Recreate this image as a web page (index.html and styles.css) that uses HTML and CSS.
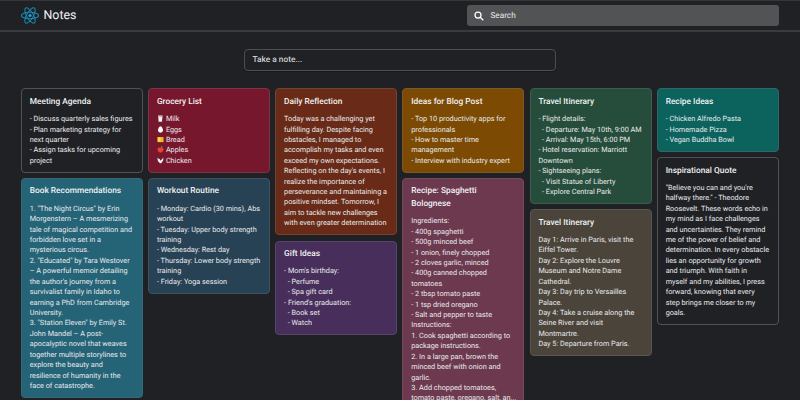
FILE: index.html
```html
<!DOCTYPE html>
<html lang="en">
<head>
<meta charset="utf-8">
<title>Notes</title>
<link rel="stylesheet" href="styles.css">
</head>
<body>
<header class="topbar">
  <svg class="logo" viewBox="-11.5 -10.5 23 21" fill="none" stroke="#1689b5" stroke-width="1.3">
    <circle r="2" fill="#2ba5d0" stroke="none"/>
    <ellipse rx="11" ry="4.2"/>
    <ellipse rx="11" ry="4.2" transform="rotate(60)"/>
    <ellipse rx="11" ry="4.2" transform="rotate(120)"/>
  </svg>
  <h1 class="brand">Notes</h1>
  <div class="search">
    <svg class="search-icon" viewBox="0 0 10 10" fill="none" stroke="#fff" stroke-width="1.25"><circle cx="4" cy="4" r="3"/><path d="M6.2 6.2 9.3 9.3"/></svg>
    <span>Search</span>
  </div>
</header>
<div class="composer">Take a note...</div>
<main class="board">
  <div class="column">
    <article class="card plain"><h2>Meeting Agenda</h2><p>- Discuss quarterly sales figures
- Plan marketing strategy for
next quarter
- Assign tasks for upcoming
project</p></article>
    <article class="card cyan"><h2>Book Recommendations</h2><p>1. "The Night Circus" by Erin
Morgenstern – A mesmerizing
tale of magical competition and
forbidden love set in a
mysterious circus.
2. "Educated" by Tara Westover
– A powerful memoir detailing
the author's journey from a
survivalist family in Idaho to
earning a PhD from Cambridge
University.
3. "Station Eleven" by Emily St.
John Mandel – A post-
apocalyptic novel that weaves
together multiple storylines to
explore the beauty and
resilience of humanity in the
face of catastrophe.</p></article>
  </div>
  <div class="column">
    <article class="card crimson"><h2>Grocery List</h2><p><svg class="food" viewBox="0 0 8 8"><path d="M1.3.6h5L5.7 7.6H1.9z" fill="#f4f5f2"/><path d="M1.7 1.6h4.2v.8H1.7z" fill="#8d9a96"/></svg>Milk
<svg class="food" viewBox="0 0 8 8"><path d="M4 .3C5.6.3 6.8 3 6.8 4.9a2.8 2.8 0 0 1-5.6 0C1.2 3 2.4.3 4 .3z" fill="#fff"/></svg>Eggs
<svg class="food" viewBox="0 0 8 8"><path d="M.5 1.2h7v5.8h-7z" fill="#f3b51c"/><path d="M1 1.6h3v4.8H1z" fill="#ffd653"/></svg>Bread
<svg class="food" viewBox="0 0 8 8"><path d="M4 2.3C1.5.9.4 2.5.7 4.4.9 6 2.3 8 4 7.4 5.7 8 7.1 6 7.3 4.4 7.6 2.5 6.5.9 4 2.3z" fill="#ef4128"/><path d="M3.8 2.2C3.8.7 5 .1 6.2.4 6.1 1.6 5 2.3 3.8 2.2z" fill="#54a43b"/><path d="M4 2.5 2.9.5" stroke="#542b1b" stroke-width=".7"/></svg>Apples
<svg class="food" viewBox="0 0 8 8"><path d="M.5.8 3 2.2 4 4.2 7.3.6 7.1 3.8 4.8 7.2H3.4L1 4.7z" fill="#f4f6f0"/><path d="M.7.8 2.7 1 3 2.6zM4.2 3.1 5.7.9 7.3.6z" fill="#284d3b"/></svg>Chicken</p></article>
    <article class="card navy"><h2>Workout Routine</h2><p>- Monday: Cardio (30 mins), Abs
workout
- Tuesday: Upper body strength
training
- Wednesday: Rest day
- Thursday: Lower body strength
training
- Friday: Yoga session</p></article>
  </div>
  <div class="column">
    <article class="card rust"><h2>Daily Reflection</h2><p>Today was a challenging yet
fulfilling day. Despite facing
obstacles, I managed to
accomplish my tasks and even
exceed my own expectations.
Reflecting on the day's events, I
realize the importance of
perseverance and maintaining a
positive mindset. Tomorrow, I
aim to tackle new challenges
with even greater determination</p></article>
    <article class="card purple"><h2>Gift Ideas</h2><p>- Mom's birthday:
  - Perfume
  - Spa gift card
- Friend's graduation:
  - Book set
  - Watch</p></article>
  </div>
  <div class="column">
    <article class="card amber"><h2>Ideas for Blog Post</h2><p>- Top 10 productivity apps for
professionals
- How to master time
management
- Interview with industry expert</p></article>
    <article class="card plum"><h2>Recipe: Spaghetti
Bolognese</h2><p>Ingredients:
- 400g spaghetti
- 500g minced beef
- 1 onion, finely chopped
- 2 cloves garlic, minced
- 400g canned chopped
tomatoes
- 2 tbsp tomato paste
- 1 tsp dried oregano
- Salt and pepper to taste
Instructions:
1. Cook spaghetti according to
package instructions.
2. In a large pan, brown the
minced beef with onion and
garlic.
3. Add chopped tomatoes,
tomato paste, oregano, salt, an...</p></article>
  </div>
  <div class="column">
    <article class="card green"><h2>Travel Itinerary</h2><p>- Flight details:
  - Departure: May 10th, 9:00 AM
  - Arrival: May 15th, 6:00 PM
- Hotel reservation: Marriott
Downtown
- Sightseeing plans:
  - Visit Statue of Liberty
  - Explore Central Park</p></article>
    <article class="card taupe"><h2>Travel Itinerary</h2><p>Day 1: Arrive in Paris, visit the
Eiffel Tower.
Day 2: Explore the Louvre
Museum and Notre Dame
Cathedral.
Day 3: Day trip to Versailles
Palace.
Day 4: Take a cruise along the
Seine River and visit
Montmartre.
Day 5: Departure from Paris.</p></article>
  </div>
  <div class="column">
    <article class="card teal"><h2>Recipe Ideas</h2><p>- Chicken Alfredo Pasta
- Homemade Pizza
- Vegan Buddha Bowl</p></article>
    <article class="card plain"><h2>Inspirational Quote</h2><p>"Believe you can and you're
halfway there." - Theodore
Roosevelt. These words echo in
my mind as I face challenges
and uncertainties. They remind
me of the power of belief and
determination. In every obstacle
lies an opportunity for growth
and triumph. With faith in
myself and my abilities, I press
forward, knowing that every
step brings me closer to my
goals.</p></article>
  </div>
</main>
</body>
</html>
```
FILE: styles.css
```css
* { box-sizing: border-box; }
html { overflow: hidden; }
body {
  margin: 0;
  height: 400px;
  overflow: hidden;
  background: #202124;
  color: #e8eaed;
  font-family: Roboto, "Liberation Sans", sans-serif;
  text-rendering: geometricPrecision;
}
h1, h2, p { margin: 0; }
.topbar {
  display: flex;
  align-items: center;
  height: 32px;
  padding: 0 21px;
  border-top: 1px solid #35363a;
  border-bottom: 2px solid #3a3b3e;
}
.logo { width: 18px; height: 17px; }
.brand { margin-left: 4.5px; font-size: 12.4px; font-weight: 400; color: #f1f2f3; }
.search {
  display: flex;
  align-items: center;
  width: 312px;
  height: 21px;
  margin-left: auto;
  padding-left: 7px;
  border-radius: 3px;
  background: #525355;
  font-size: 8.2px;
}
.search-icon { width: 10px; height: 10px; margin-right: 6.5px; }
.composer {
  width: 312.5px;
  height: 22px;
  margin: 17px 0 0 243.5px;
  padding-left: 8px;
  border: 1px solid #4c4e52;
  border-radius: 4px;
  font-size: 8.33px;
  font-weight: 500;
  line-height: 21px;
  color: #cfd0d2;
  box-shadow: 0 1px 1px #17181a;
}
.board {
  display: grid;
  grid-template-columns: repeat(6, 122px);
  column-gap: 5.2px;
  align-items: start;
  margin: 17.4px 0 0 20.9px;
}
.column { display: grid; grid-template-columns: 122px; gap: 5.4px; }
.card {
  padding: 6.4px 7.8px 5.5px;
  border: 1px solid #5f6368;
  border-radius: 4px;
  white-space: pre;
}
.card h2 { margin-bottom: 5.8px; font-size: 8.33px; font-weight: 500; line-height: 12.5px; letter-spacing: .01px; color: #f1f2f3; }
.card p { font-size: 7.29px; line-height: 10.42px; }
.food { width: 7px; height: 7px; margin-right: 2px; vertical-align: -1px; }
.plain { border-color: #505256; }
.cyan { background: #256377; border-color: #36677a; }
.crimson { background: #77172e; border-color: #783747; }
.navy { background: #284255; border-color: #3d5261; }
.rust { background: #692b17; border-color: #704432; }
.purple { background: #472e5b; border-color: #564568; }
.amber { background: #7c4a03; border-color: #7c5727; }
.plum { background: #6c394f; border-color: #744b5e; }
.green { background: #264d3b; border-color: #3d5e4f; }
.taupe { background: #4b443a; border-color: #5a564f; }
.teal { background: #0c625d; border-color: #2b6966; }
```
